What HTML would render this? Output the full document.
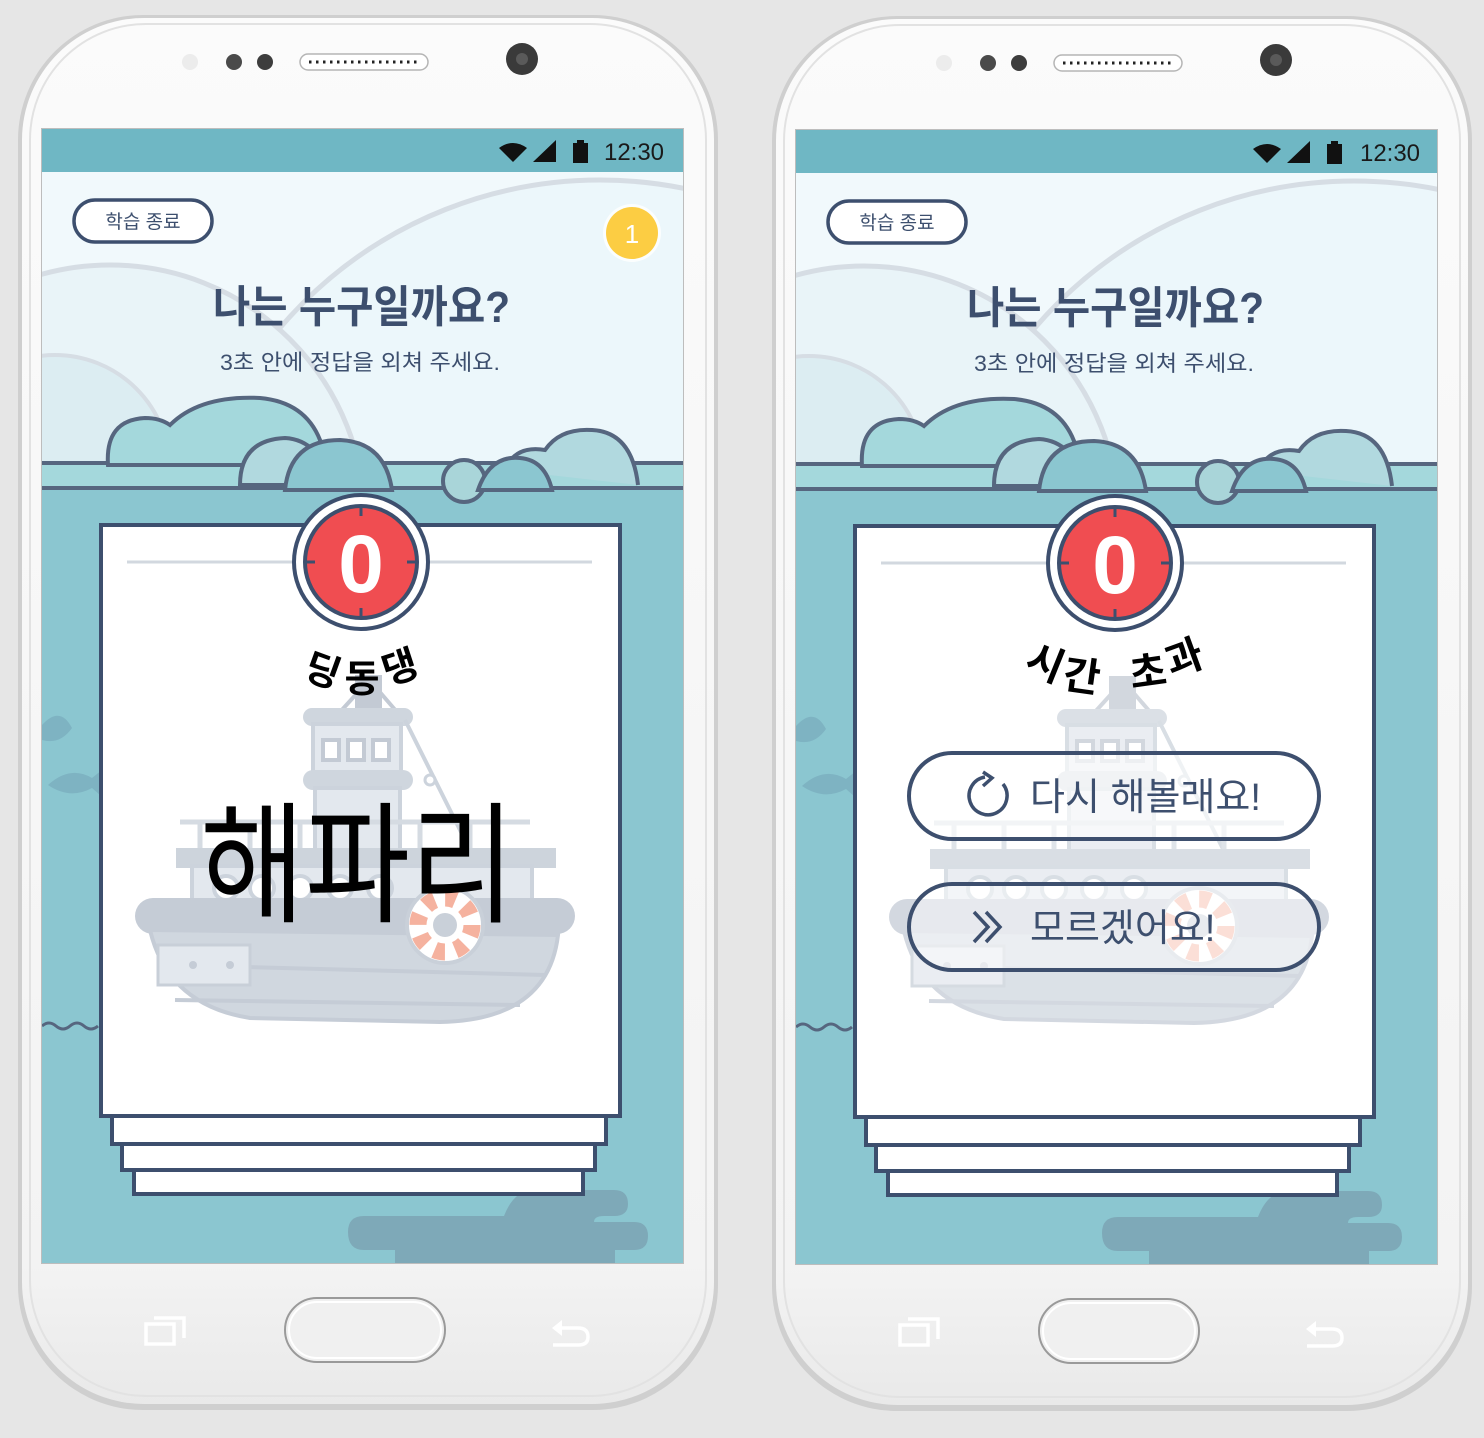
<!DOCTYPE html>
<html><head><meta charset="utf-8">
<style>
html,body{margin:0;padding:0;background:#e6e6e6;}
svg{display:block;}
text{font-family:"Liberation Sans","Noto Sans CJK KR",sans-serif;}
</style></head>
<body>
<svg width="1484" height="1438" viewBox="0 0 1484 1438" xmlns="http://www.w3.org/2000/svg">
<defs>
  <clipPath id="scr"><rect x="42" y="129" width="641" height="1134"/></clipPath>
  <linearGradient id="body" x1="0" y1="0" x2="0" y2="1">
    <stop offset="0" stop-color="#fbfbfb"/><stop offset="0.9" stop-color="#f3f3f3"/><stop offset="1" stop-color="#e9e9e9"/>
  </linearGradient>
  <g id="boat">
    <rect x="355" y="675" width="27" height="40" fill="#c3cad4"/>
    <path d="M340 712 L360 690 M397 712 L378 690" stroke="#c3cad4" stroke-width="4"/>
    <rect x="303" y="708" width="110" height="18" rx="9" fill="#cfd6de"/>
    <rect x="313" y="724" width="88" height="50" fill="#e3e8ee" stroke="#ccd3dc" stroke-width="4"/>
    <rect x="323" y="740" width="16" height="20" fill="#fff" stroke="#c3cad4" stroke-width="4"/>
    <rect x="348" y="740" width="16" height="20" fill="#fff" stroke="#c3cad4" stroke-width="4"/>
    <rect x="373" y="740" width="16" height="20" fill="#fff" stroke="#c3cad4" stroke-width="4"/>
    <rect x="303" y="770" width="110" height="20" rx="10" fill="#cfd6de"/>
    <rect x="315" y="788" width="85" height="70" fill="#e3e8ee" stroke="#ccd3dc" stroke-width="4"/>
    <path d="M405 720 L470 850" stroke="#ccd3dc" stroke-width="4"/>
    <circle cx="430" cy="780" r="5" fill="#fff" stroke="#ccd3dc" stroke-width="3"/>
    <path d="M180 822 L530 822 M200 822 L200 855 M250 822 L250 855 M300 822 L300 855 M420 822 L420 855 M470 822 L470 855" stroke="#d5dbe2" stroke-width="5"/>
    <rect x="176" y="848" width="380" height="20" fill="#cdd4dc"/>
    <rect x="192" y="866" width="340" height="45" fill="#e3e8ee" stroke="#ccd3dc" stroke-width="4"/>
    <g fill="#fff" stroke="#ccd3dc" stroke-width="4">
      <circle cx="226" cy="888" r="12"/><circle cx="262" cy="888" r="12"/><circle cx="300" cy="888" r="12"/><circle cx="340" cy="888" r="12"/><circle cx="380" cy="888" r="12"/>
    </g>
    <rect x="135" y="898" width="440" height="36" rx="18" fill="#c5ccd6"/>
    <path d="M150 930 L558 935 Q548 1020 440 1022 L250 1018 Q168 1005 150 930 Z" fill="#d0d7df" stroke="#c5ccd6" stroke-width="4"/>
    <path d="M170 965 L545 975 M175 1000 L520 1005" stroke="#c5ccd6" stroke-width="4"/>
    <rect x="158" y="945" width="92" height="40" fill="#e3e8ee" stroke="#c8cfd8" stroke-width="3"/>
    <circle cx="193" cy="965" r="4" fill="#c5ccd6"/><circle cx="230" cy="965" r="4" fill="#c5ccd6"/>
    <circle cx="445" cy="925" r="38" fill="#fff" stroke="#c9d0d9" stroke-width="4"/>
    <circle cx="445" cy="925" r="27" fill="none" stroke="#f5b29f" stroke-width="17" stroke-dasharray="10.6 10.6"/>
    <circle cx="445" cy="925" r="12" fill="#c9d0d9"/>
  </g>
  <g id="phone">
    <rect x="18" y="15" width="700" height="1395" rx="125" fill="#cfcfcf"/>
    <rect x="22" y="18" width="692" height="1386" rx="122" fill="url(#body)"/>
    <rect x="30" y="24" width="676" height="1372" rx="116" fill="none" stroke="#e2e2e2" stroke-width="2"/>
    <circle cx="190" cy="62" r="8" fill="#ececec"/>
    <circle cx="234" cy="62" r="8" fill="#4a4a4a"/>
    <circle cx="265" cy="62" r="8" fill="#3d3d3d"/>
    <rect x="300" y="54" width="128" height="16" rx="8" fill="#fff" stroke="#b5b5b5" stroke-width="1.5"/>
    <line x1="309" y1="62" x2="420" y2="62" stroke="#222" stroke-width="3" stroke-dasharray="2.5 4.5"/>
    <circle cx="522" cy="59" r="16" fill="#3a3a3a"/><circle cx="522" cy="59" r="6" fill="#5a5a5a"/>
    <rect x="41" y="128" width="643" height="1136" fill="#bdbdbd"/>
    <g clip-path="url(#scr)">
      <rect x="42" y="129" width="641" height="1134" fill="#f1f9fc"/>
      <circle cx="600" cy="600" r="420" fill="#ecf7fb" stroke="#d6dde4" stroke-width="5"/>
      <circle cx="110" cy="520" r="255" fill="#e9f4f8" stroke="#d6dde4" stroke-width="5"/>
      <circle cx="55" cy="470" r="115" fill="#dcedf2" stroke="#d6dde4" stroke-width="4"/>
      <rect x="42" y="129" width="641" height="43" fill="#6fb7c4"/>
      <rect x="42" y="463" width="641" height="25" fill="#a4d8dc"/>
      <rect x="42" y="488" width="641" height="780" fill="#8bc6d0"/>
      <path d="M42 463 H683 M42 488 H683" stroke="#56667f" stroke-width="4"/>
      <path d="M108 465 Q105 420 145 418 Q160 418 170 425 Q200 395 260 398 Q305 402 320 440 L320 465 Z" fill="#a4d8dc" stroke="#56667f" stroke-width="4"/>
      <path d="M240 485 Q240 440 285 438 Q320 440 330 485 Z" fill="#b1d9df" stroke="#56667f" stroke-width="4"/>
      <path d="M285 490 Q290 440 340 440 Q385 442 392 490 Z" fill="#8bc6d0" stroke="#56667f" stroke-width="4"/>
      <circle cx="464" cy="481" r="21" fill="#a9d5d9" stroke="#56667f" stroke-width="4"/>
      <path d="M505 470 Q515 445 545 450 Q560 428 592 430 Q632 432 638 485" fill="#b1d9df" stroke="#56667f" stroke-width="4"/>
      <path d="M478 490 Q490 455 520 458 Q545 460 552 490 Z" fill="#8bc6d0" stroke="#56667f" stroke-width="4"/>
      <path d="M42 725 Q60 705 72 728 Q60 745 42 740 Z" fill="#7eb3c2"/>
      <path d="M48 785 Q70 765 92 778 L102 770 L100 795 L92 788 Q70 800 48 785 Z" fill="#7eb3c2"/>
      <path d="M42 1026 q7 -6 14 0 t14 0 t14 0 t14 0" fill="none" stroke="#56667f" stroke-width="3"/>
      <path d="M348 1232 q0 -16 16 -16 h140 q10 -26 30 -26 h80 q14 0 14 14 q0 12 -14 12 h-10 q-10 0 -10 6 h40 q14 0 14 14 q0 14 -14 14 h-270 q-16 0 -16 -18 Z" fill="#7ea9b8"/>
      <rect x="395" y="1240" width="220" height="30" fill="#7ea9b8"/>
    </g>
    <g fill="#111">
      <path d="M499 148 Q513 138 527 148 L513 162 Z"/>
      <path d="M533 162 L556 140 L556 162 Z"/>
      <rect x="573" y="143" width="15" height="20"/><rect x="577" y="140" width="7" height="4"/>
    </g>
    <rect x="74" y="200" width="138" height="42" rx="21" fill="#fff" stroke="#3d4f6e" stroke-width="3.5"/>
    <rect x="101" y="525" width="519" height="591" fill="#fff" stroke="#3d4f6e" stroke-width="4"/>
    <rect x="134" y="1168" width="449" height="26" fill="#fff" stroke="#3d4f6e" stroke-width="4"/>
    <rect x="122" y="1142" width="473" height="28" fill="#fff" stroke="#3d4f6e" stroke-width="4"/>
    <rect x="112" y="1116" width="494" height="28" fill="#fff" stroke="#3d4f6e" stroke-width="4"/>
    <rect x="103" y="527" width="515" height="587" fill="#fff"/>
    <line x1="127" y1="562" x2="592" y2="562" stroke="#d2d8df" stroke-width="3"/>
    <rect x="285" y="1298" width="160" height="64" rx="32" fill="#f0f0f0" stroke="#9a9a9a" stroke-width="2"/>
    <rect x="289" y="1302" width="152" height="56" rx="28" fill="none" stroke="#fff" stroke-width="2"/>
    <g fill="none" stroke="#fff" stroke-width="3.5">
      <rect x="146" y="1324" width="28" height="20"/>
      <path d="M154 1318 H184 V1338"/>
      <path d="M556 1328 H578 Q588 1328 588 1337 Q588 1345 578 1345 H553"/>
    </g>
    <path d="M552 1328 L562 1320 L562 1336 Z" fill="#fff"/>
  </g>
</defs>

<!-- LEFT PHONE -->
<use href="#phone"/>
<text x="634" y="160" font-size="24" fill="#1a1a1a" text-anchor="middle">12:30</text>
<text x="143" y="228" font-size="19" fill="#3d4f6e" text-anchor="middle">학습 종료</text>
<circle cx="632" cy="233" r="29" fill="#fff" opacity="0.8"/>
<circle cx="632" cy="233" r="26" fill="#fccd43"/>
<text x="632" y="243" font-size="26" fill="#fff" text-anchor="middle">1</text>
<text x="213" y="322" font-size="44" font-weight="bold" fill="#3d4f6e" textLength="297" lengthAdjust="spacingAndGlyphs">나는 누구일까요?</text>
<text x="220" y="370" font-size="22" fill="#3d4f6e" textLength="280" lengthAdjust="spacingAndGlyphs">3초 안에 정답을 외쳐 주세요.</text>
<use href="#boat"/>
<circle cx="361" cy="562" r="67" fill="#fff" stroke="#3d4f6e" stroke-width="4"/>
<circle cx="361" cy="562" r="56" fill="#f04d51" stroke="#3d4f6e" stroke-width="4"/>
<path d="M361 506 v10 M361 608 v10 M305 562 h10 M407 562 h10" stroke="#3d4f6e" stroke-width="3"/>
<text x="361" y="592" font-size="82" font-weight="bold" fill="#fff" text-anchor="middle">0</text>
<g font-size="38" font-weight="bold" fill="#000" text-anchor="middle">
  <text transform="translate(318,683) rotate(20)">딩</text>
  <text transform="translate(362,692)">동</text>
  <text transform="translate(404,680) rotate(-18)">댕</text>
</g>
<text x="200" y="912" font-size="132" fill="#000" textLength="315" lengthAdjust="spacingAndGlyphs">해파리</text>

<!-- RIGHT PHONE -->
<use href="#phone" transform="translate(754,1)"/>
<text x="1390" y="161" font-size="24" fill="#1a1a1a" text-anchor="middle">12:30</text>
<text x="897" y="229" font-size="19" fill="#3d4f6e" text-anchor="middle">학습 종료</text>
<text x="967" y="323" font-size="44" font-weight="bold" fill="#3d4f6e" textLength="297" lengthAdjust="spacingAndGlyphs">나는 누구일까요?</text>
<text x="974" y="371" font-size="22" fill="#3d4f6e" textLength="280" lengthAdjust="spacingAndGlyphs">3초 안에 정답을 외쳐 주세요.</text>
<use href="#boat" transform="translate(754,1)" opacity="0.75"/>
<circle cx="1115" cy="563" r="67" fill="#fff" stroke="#3d4f6e" stroke-width="4"/>
<circle cx="1115" cy="563" r="56" fill="#f04d51" stroke="#3d4f6e" stroke-width="4"/>
<path d="M1115 507 v10 M1115 609 v10 M1059 563 h10 M1161 563 h10" stroke="#3d4f6e" stroke-width="3"/>
<text x="1115" y="593" font-size="82" font-weight="bold" fill="#fff" text-anchor="middle">0</text>
<g font-size="40" font-weight="bold" fill="#000" text-anchor="middle">
  <text transform="translate(1040,676) rotate(22)">시</text>
  <text transform="translate(1080,690) rotate(8)">간</text>
  <text transform="translate(1150,686) rotate(-8)">초</text>
  <text transform="translate(1189,671) rotate(-20)">과</text>
</g>
<rect x="909" y="753" width="410" height="86" rx="43" fill="#fff" fill-opacity="0.6" stroke="#3d4f6e" stroke-width="4"/>
<rect x="909" y="884" width="410" height="86" rx="43" fill="#fff" fill-opacity="0.45" stroke="#3d4f6e" stroke-width="4"/>
<path d="M1003 784 A19 19 0 1 1 985 777" fill="none" stroke="#3d4f6e" stroke-width="3.5"/>
<path d="M983 772 L992 778 L983 786" fill="none" stroke="#3d4f6e" stroke-width="3.5"/>
<path d="M974 912 L988 927 L974 942 M986 912 L1000 927 L986 942" fill="none" stroke="#3d4f6e" stroke-width="3.5"/>
<text x="1030" y="810" font-size="38" fill="#3d4f6e">다시 해볼래요!</text>
<text x="1030" y="941" font-size="38" fill="#3d4f6e">모르겠어요!</text>
</svg>
</body></html>
